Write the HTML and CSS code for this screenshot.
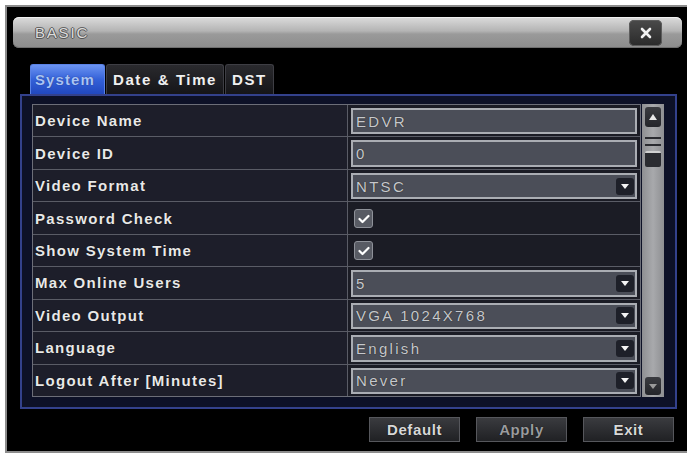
FILE: index.html
```html
<!DOCTYPE html>
<html lang="en">
<head>
    <meta charset="UTF-8">
    <meta name="viewport" content="width=device-width, initial-scale=1.0">
    <title>BASIC</title>
    <link rel="stylesheet" href="styles.css">
</head>
<body>
    <div class="window">
        <!-- Title bar -->
        <div class="titlebar">
            <div class="title">BASIC</div>
            <div class="close-btn">
                <svg width="12" height="12" viewBox="0 0 12 12">
                    <path d="M2 2 L10 10 M10 2 L2 10" stroke="#f2f2f2" stroke-width="2.6" stroke-linecap="round"/>
                </svg>
            </div>
        </div>

        <!-- Tabs -->
        <div class="tabs">
            <div class="tab active">System</div>
            <div class="tab">Date &amp; Time</div>
            <div class="tab">DST</div>
        </div>

        <!-- Settings panel -->
        <div class="panel">
            <div class="settings">
                <div class="label">Device Name</div>
                <div class="value"><div class="field">EDVR</div></div>

                <div class="label">Device ID</div>
                <div class="value"><div class="field">0</div></div>

                <div class="label">Video Format</div>
                <div class="value"><div class="field">NTSC<span class="arrow"></span></div></div>

                <div class="label">Password Check</div>
                <div class="value"><span class="checkbox"><svg width="12" height="10" viewBox="0 0 12 10"><path d="M1.5 5 L4.5 8 L10.5 2" fill="none" stroke="#fff" stroke-width="2.2" stroke-linecap="round" stroke-linejoin="round"/></svg></span></div>

                <div class="label">Show System Time</div>
                <div class="value"><span class="checkbox"><svg width="12" height="10" viewBox="0 0 12 10"><path d="M1.5 5 L4.5 8 L10.5 2" fill="none" stroke="#fff" stroke-width="2.2" stroke-linecap="round" stroke-linejoin="round"/></svg></span></div>

                <div class="label">Max Online Users</div>
                <div class="value"><div class="field">5<span class="arrow"></span></div></div>

                <div class="label">Video Output</div>
                <div class="value"><div class="field">VGA 1024X768<span class="arrow"></span></div></div>

                <div class="label">Language</div>
                <div class="value"><div class="field">English<span class="arrow"></span></div></div>

                <div class="label">Logout After [Minutes]</div>
                <div class="value"><div class="field">Never<span class="arrow"></span></div></div>
            </div>

            <div class="scrollbar">
                <div class="scroll-btn"><span class="tri-up"></span></div>
                <div class="thumb">
                    <div class="thumb-line"></div>
                    <div class="thumb-line"></div>
                    <div class="thumb-block"></div>
                </div>
                <div class="scroll-btn bottom"><span class="tri-down"></span></div>
            </div>
        </div>

        <!-- Buttons -->
        <div class="buttons">
            <div class="btn">Default</div>
            <div class="btn disabled">Apply</div>
            <div class="btn">Exit</div>
        </div>
    </div>
</body>
</html>
```

FILE: styles.css
```css
body {
    margin: 0;
    background-color: #ffffff;
    font-family: 'Liberation Sans', Arial, sans-serif;
}
.window {
    box-sizing: border-box;
    margin: 5px 0 0 5px;
    width: 682px;
    height: 448px;
    border: 2px solid #8c8c8c;
    border-right: none;
    background-color: #000;
    display: flex;
    flex-direction: column;
}
.titlebar {
    margin: 10px 5px 0 6px;
    height: 31px;
    border-radius: 6px;
    background: linear-gradient(#dcdcdc, #b4b4b4 45%, #9a9a9a 55%, #8c8c8c);
    box-shadow: inset 0 1px 0 #efefef, inset 0 -1px 0 #6e6e6e;
    display: flex;
    align-items: center;
    justify-content: space-between;
}
.title {
    margin-left: 22px;
    font-size: 15px;
    letter-spacing: 1.8px;
    color: #dcdcdc;
    text-shadow: 1px 0 0 #555, -1px 0 0 #555, 0 1px 0 #555, 0 -1px 0 #666;
}
.close-btn {
    width: 33px;
    height: 26px;
    margin-right: 20px;
    border-radius: 5px;
    background: linear-gradient(#4a4a4a, #2a2a2a);
    box-shadow: inset 0 0 0 1px #5c5c5c;
    display: flex;
    align-items: center;
    justify-content: center;
}
.tabs {
    margin-top: 16px;
    padding-left: 23px;
    height: 30px;
    display: flex;
    align-items: flex-end;
}
.tab {
    box-sizing: border-box;
    height: 30px;
    padding: 0 6px;
    margin-right: 1px;
    border: 1px solid #3e3e44;
    border-bottom: none;
    border-radius: 3px 3px 0 0;
    background: linear-gradient(#2a2a2e, #151518);
    color: #f0f0f0;
    font-size: 15px;
    font-weight: bold;
    letter-spacing: 1.6px;
    line-height: 29px;
}
.tab.active {
    width: 75px;
    border-color: #5a82e6;
    background: linear-gradient(#6b94f2, #3461d8 50%, #2148bf);
    color: #a9c4f6;
    letter-spacing: 1.1px;
    text-shadow: 0 0 1px #1a2a70;
    padding: 0 4px;
}
.panel {
    box-sizing: border-box;
    margin: 0 10px 0 13px;
    height: 315px;
    border: 2px solid #33418c;
    background-color: #0d1127;
    padding: 8px 9px 10px 10px;
    display: flex;
}
.settings {
    width: 609px;
    box-sizing: border-box;
    display: grid;
    grid-template-columns: 314px 1fr;
    grid-template-rows: repeat(9, 1fr);
    gap: 1px;
    border: 1px solid #6c6e78;
    background-color: #5a5c66;
}
.label {
    background-color: #1d1e2a;
    color: #e8e8e8;
    font-size: 15px;
    font-weight: bold;
    letter-spacing: 1.3px;
    padding-left: 2px;
    display: flex;
    align-items: center;
    text-shadow: 0 0 1px #000;
}
.value {
    background-color: #1b1c25;
    padding: 3px 3px 2px 3px;
    display: flex;
    align-items: center;
}
.field {
    box-sizing: border-box;
    width: 100%;
    height: 100%;
    border: 2px solid #aaadb3;
    background-color: #4b4e58;
    color: #c6c8cc;
    font-size: 15px;
    letter-spacing: 2.3px;
    padding-left: 3px;
    display: flex;
    align-items: center;
    text-shadow: 0 0 1px #1a1a1a;
}
.arrow {
    margin-left: auto;
    margin-right: 1px;
    width: 18px;
    height: 17px;
    border-radius: 3px;
    background-color: #1e2029;
    position: relative;
}
.arrow::after {
    content: '';
    position: absolute;
    left: 5px;
    top: 6px;
    border-left: 4px solid transparent;
    border-right: 4px solid transparent;
    border-top: 5px solid #f4f4f4;
}
.checkbox {
    box-sizing: border-box;
    width: 19px;
    height: 19px;
    margin-left: 3px;
    border: 1px solid #8e9199;
    border-radius: 3px;
    background-color: #585b64;
    display: flex;
    align-items: center;
    justify-content: center;
}
.scrollbar {
    width: 22px;
    margin-left: 1px;
    box-sizing: border-box;
    background: linear-gradient(90deg, #8e8f92, #a8a9ac 50%, #8e8f92);
    padding: 3px 3px 2px 3px;
    display: flex;
    flex-direction: column;
}
.scroll-btn {
    height: 20px;
    border-radius: 3px;
    background: linear-gradient(#3a3b40, #24252a);
    display: flex;
    align-items: center;
    justify-content: center;
}
.scroll-btn.bottom {
    margin-top: auto;
    height: 18px;
}
.tri-up {
    border-left: 4px solid transparent;
    border-right: 4px solid transparent;
    border-bottom: 6px solid #e8e8e8;
}
.tri-down {
    border-left: 4px solid transparent;
    border-right: 4px solid transparent;
    border-top: 5px solid #9a9a9a;
}
.thumb {
    margin-top: 10px;
    display: flex;
    flex-direction: column;
    gap: 5px;
}
.thumb-line {
    height: 2px;
    background-color: #2a2b30;
}
.thumb-block {
    height: 14px;
    border-radius: 2px;
    background-color: #2a2b30;
    border-top: 2px solid #d0d0d0;
}
.buttons {
    margin-top: 8px;
    padding-right: 13px;
    display: flex;
    justify-content: flex-end;
    gap: 16px;
}
.btn {
    box-sizing: border-box;
    width: 91px;
    height: 25px;
    border: 1px solid #56575c;
    background: linear-gradient(#3a3b3f, #202124);
    color: #d8d8d8;
    font-size: 15px;
    font-weight: bold;
    letter-spacing: 0.6px;
    text-align: center;
    line-height: 23px;
    text-shadow: 0 0 1px #000;
}
.btn.disabled {
    color: #9a9b9e;
}
```
